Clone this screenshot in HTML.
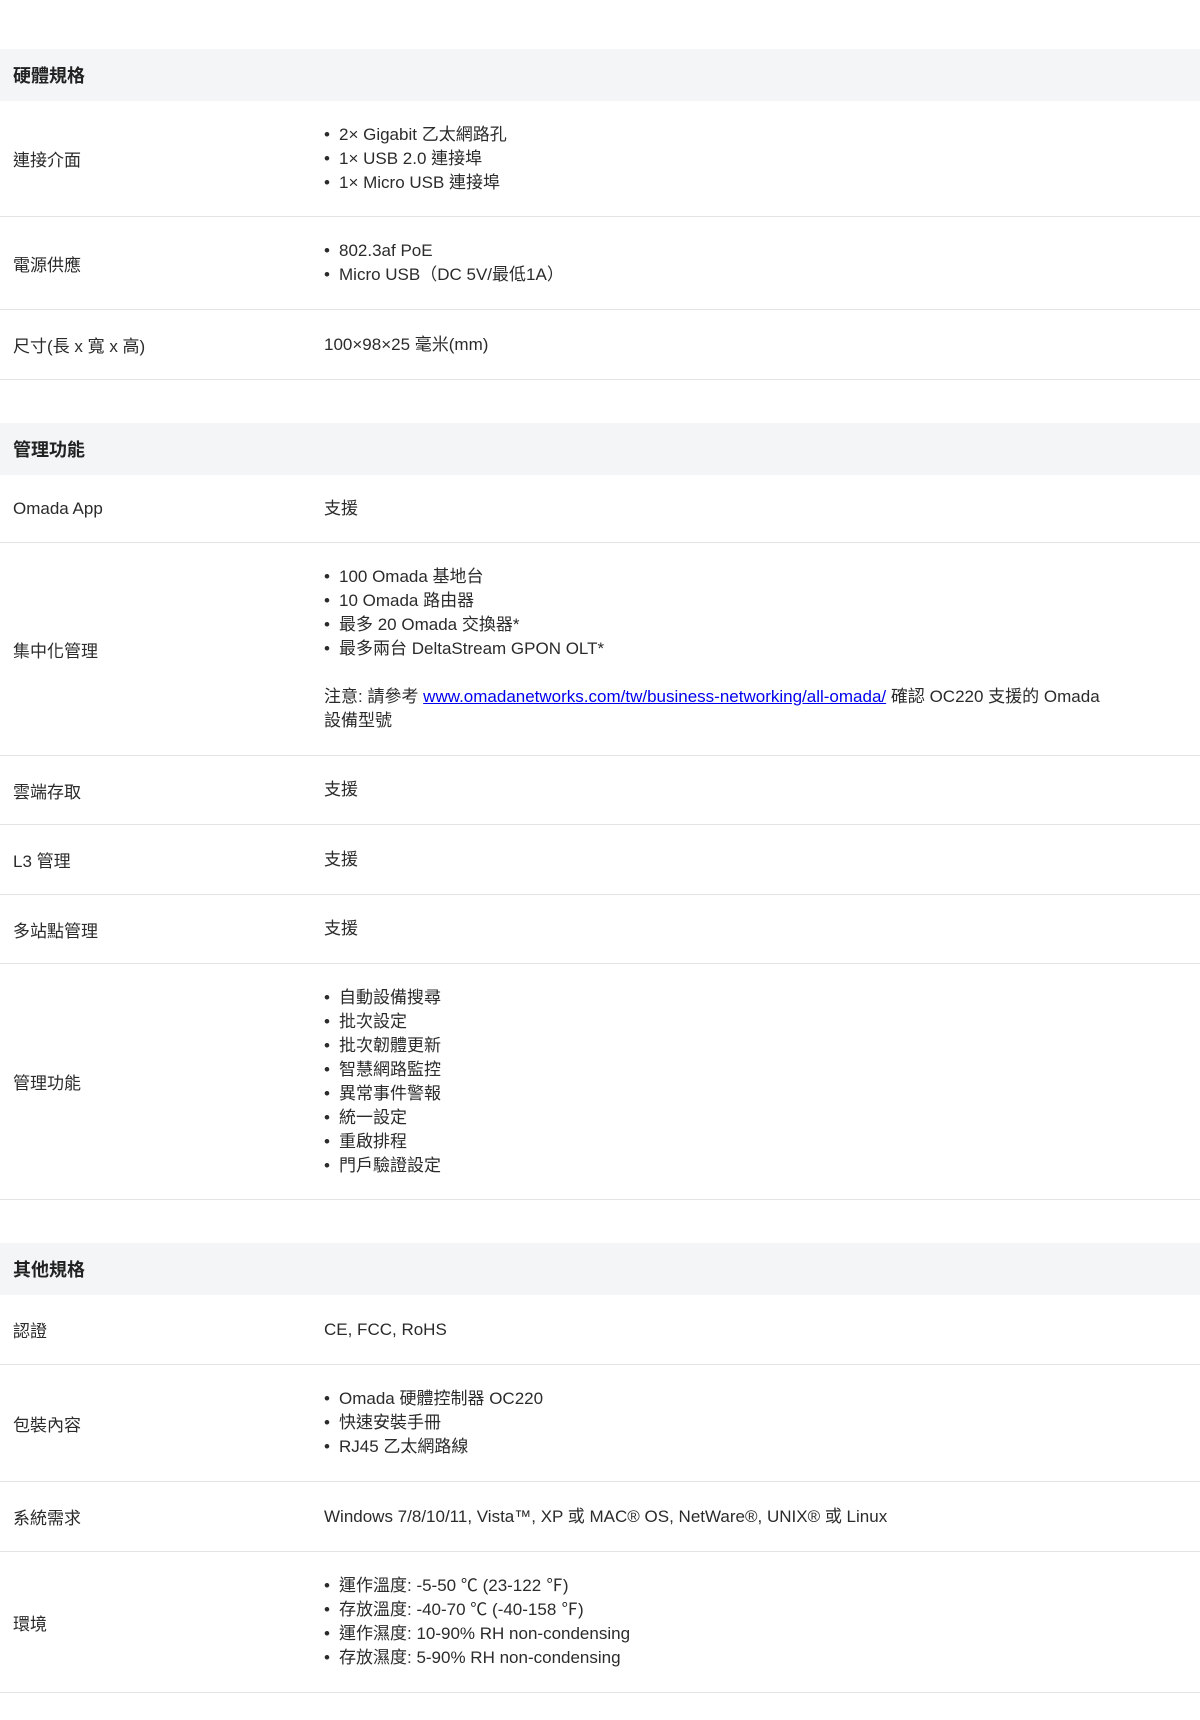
<!DOCTYPE html>
<html><head><meta charset="utf-8"><style>
body{margin:0;background:#fff;font-family:"Liberation Sans","Noto Sans CJK TC",sans-serif;color:#2b2b2b;font-size:17px;}
.wrap{width:1200px;}
.h{background:#f4f5f7;height:52px;display:flex;align-items:center;padding-left:13px;font-weight:bold;font-size:18px;color:#222;box-sizing:border-box}
.r{display:flex;align-items:center;border-bottom:1px solid #e4e4e4;box-sizing:border-box}
.l{width:324px;padding-left:13px;box-sizing:border-box}
.v{flex:1;line-height:24px;padding-right:15px}
.b{display:inline-block;width:15px;}
a{color:#00e;text-decoration:underline}
</style></head><body><div class="wrap">
<div style="height:49px"></div>
<div class="h">硬體規格</div>
<div class="r" style="height:116px"><div class="l">連接介面</div><div class="v"><span class="b">•</span>2× Gigabit 乙太網路孔<br><span class="b">•</span>1× USB 2.0 連接埠<br><span class="b">•</span>1× Micro USB 連接埠</div></div>
<div class="r" style="height:93px"><div class="l">電源供應</div><div class="v"><span class="b">•</span>802.3af PoE<br><span class="b">•</span>Micro USB（DC 5V/最低1A）</div></div>
<div class="r" style="height:70px"><div class="l">尺寸(長 x 寬 x 高)</div><div class="v">100×98×25 毫米(mm)</div></div>
<div style="height:43px"></div>
<div class="h">管理功能</div>
<div class="r" style="height:68px"><div class="l">Omada App</div><div class="v">支援</div></div>
<div class="r" style="height:213px"><div class="l">集中化管理</div><div class="v"><span class="b">•</span>100 Omada 基地台<br><span class="b">•</span>10 Omada 路由器<br><span class="b">•</span>最多 20 Omada 交換器*<br><span class="b">•</span>最多兩台 DeltaStream GPON OLT*<br><br>注意: 請參考 <a>www.omadanetworks.com/tw/business-networking/all-omada/</a> 確認 OC220 支援的 Omada<br>設備型號</div></div>
<div class="r" style="height:69px"><div class="l">雲端存取</div><div class="v">支援</div></div>
<div class="r" style="height:70px"><div class="l">L3 管理</div><div class="v">支援</div></div>
<div class="r" style="height:69px"><div class="l">多站點管理</div><div class="v">支援</div></div>
<div class="r" style="height:236px"><div class="l">管理功能</div><div class="v"><span class="b">•</span>自動設備搜尋<br><span class="b">•</span>批次設定<br><span class="b">•</span>批次韌體更新<br><span class="b">•</span>智慧網路監控<br><span class="b">•</span>異常事件警報<br><span class="b">•</span>統一設定<br><span class="b">•</span>重啟排程<br><span class="b">•</span>門戶驗證設定</div></div>
<div style="height:43px"></div>
<div class="h">其他規格</div>
<div class="r" style="height:70px"><div class="l">認證</div><div class="v">CE, FCC, RoHS</div></div>
<div class="r" style="height:117px"><div class="l">包裝內容</div><div class="v"><span class="b">•</span>Omada 硬體控制器 OC220<br><span class="b">•</span>快速安裝手冊<br><span class="b">•</span>RJ45 乙太網路線</div></div>
<div class="r" style="height:70px"><div class="l">系統需求</div><div class="v">Windows 7/8/10/11, Vista™, XP 或 MAC® OS, NetWare®, UNIX® 或 Linux</div></div>
<div class="r" style="height:141px"><div class="l">環境</div><div class="v"><span class="b">•</span>運作溫度: -5-50 ℃ (23-122 ℉)<br><span class="b">•</span>存放溫度: -40-70 ℃ (-40-158 ℉)<br><span class="b">•</span>運作濕度: 10-90% RH non-condensing<br><span class="b">•</span>存放濕度: 5-90% RH non-condensing</div></div>
</div></body></html>
